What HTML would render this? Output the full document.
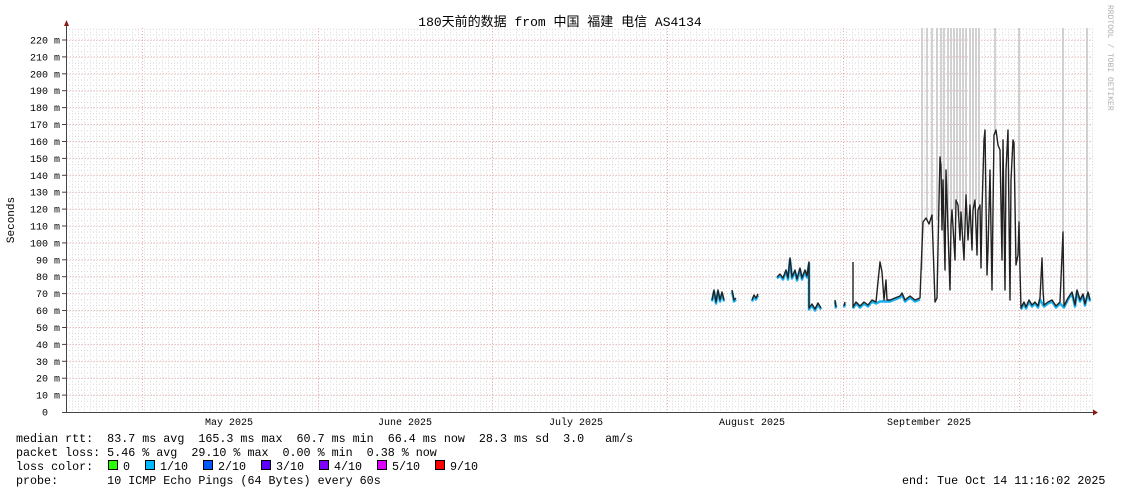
<!DOCTYPE html>
<html><head><meta charset="utf-8"><style>
html,body{margin:0;padding:0;background:#fff;width:1121px;height:494px;overflow:hidden}
svg text{font-family:"Liberation Mono","Noto Sans CJK SC",monospace;white-space:pre}
</style></head><body>
<svg width="1121" height="494" viewBox="0 0 1121 494" xmlns="http://www.w3.org/2000/svg">
<defs>
<pattern id="mg" x="66" y="40" width="6" height="5.636" patternUnits="userSpaceOnUse">
<rect x="0" y="0" width="1" height="1" fill="#d4d4d4"/>
<rect x="0" y="3" width="1" height="1" fill="#d4d4d4"/>
<rect x="3" y="0" width="1" height="1" fill="#d4d4d4"/>
</pattern>
</defs>
<rect x="67" y="28" width="1026" height="384" fill="url(#mg)"/>
<g stroke="#f0b0b0" stroke-width="1" stroke-dasharray="1,2">
<line x1="67" x2="1093" y1="40" y2="40"/><line x1="67" x2="1093" y1="56.9" y2="56.9"/><line x1="67" x2="1093" y1="73.8" y2="73.8"/><line x1="67" x2="1093" y1="90.7" y2="90.7"/><line x1="67" x2="1093" y1="107.6" y2="107.6"/><line x1="67" x2="1093" y1="124.5" y2="124.5"/><line x1="67" x2="1093" y1="141.5" y2="141.5"/><line x1="67" x2="1093" y1="158.4" y2="158.4"/><line x1="67" x2="1093" y1="175.3" y2="175.3"/><line x1="67" x2="1093" y1="192.2" y2="192.2"/><line x1="67" x2="1093" y1="209.1" y2="209.1"/><line x1="67" x2="1093" y1="226" y2="226"/><line x1="67" x2="1093" y1="242.9" y2="242.9"/><line x1="67" x2="1093" y1="259.8" y2="259.8"/><line x1="67" x2="1093" y1="276.7" y2="276.7"/><line x1="67" x2="1093" y1="293.6" y2="293.6"/><line x1="67" x2="1093" y1="310.5" y2="310.5"/><line x1="67" x2="1093" y1="327.5" y2="327.5"/><line x1="67" x2="1093" y1="344.4" y2="344.4"/><line x1="67" x2="1093" y1="361.3" y2="361.3"/><line x1="67" x2="1093" y1="378.2" y2="378.2"/><line x1="67" x2="1093" y1="395.1" y2="395.1"/>
<line x1="142.5" x2="142.5" y1="28" y2="412"/><line x1="318.5" x2="318.5" y1="28" y2="412"/><line x1="492.5" x2="492.5" y1="28" y2="412"/><line x1="667.5" x2="667.5" y1="28" y2="412"/><line x1="843.5" x2="843.5" y1="28" y2="412"/><line x1="1019.5" x2="1019.5" y1="28" y2="412"/>
</g>
<g stroke="#c4c4c4" stroke-width="1.5">
<line x1="922" x2="922" y1="28" y2="270"/><line x1="927" x2="927" y1="28" y2="220"/><line x1="932" x2="932" y1="28" y2="220"/><line x1="937" x2="937" y1="28" y2="220"/><line x1="941" x2="941" y1="28" y2="160"/><line x1="944" x2="944" y1="28" y2="200"/><line x1="948" x2="948" y1="28" y2="230"/><line x1="951" x2="951" y1="28" y2="225"/><line x1="954" x2="954" y1="28" y2="210"/><line x1="957" x2="957" y1="28" y2="200"/><line x1="960" x2="960" y1="28" y2="215"/><line x1="963" x2="963" y1="28" y2="230"/><line x1="966" x2="966" y1="28" y2="195"/><line x1="970" x2="970" y1="28" y2="205"/><line x1="973" x2="973" y1="28" y2="210"/><line x1="976" x2="976" y1="28" y2="200"/><line x1="979" x2="979" y1="28" y2="205"/><line x1="995" x2="995" y1="28" y2="135"/><line x1="1019" x2="1019" y1="28" y2="222"/><line x1="1063" x2="1063" y1="28" y2="232"/><line x1="1087" x2="1087" y1="28" y2="292"/>
</g>
<g fill="none" stroke-linejoin="round">
<g stroke="#1ab0f0" stroke-width="2.5" transform="translate(0,1.5)">
<polyline points="712,300 714,290 716,302 718,290 720,300 722,292 724,300"/><polyline points="732,290 734,300 736,298"/><polyline points="752,300 754,295 756,298 758,294"/>
<polyline points="777,277 780,274 783,278 786,270 788,278 790,258 792,277 795,270 797,279 800,268 802,278 805,270 807,276 809,262 809,308 812,304 815,309 818,303 821,308"/>
<polyline points="835,300 836,307"/><polyline points="844,306 845,302"/>
<polyline points="853,307 856,302 860,306 864,302 868,305 872,300 876,302 880,300 884,300 887,300 890,300 895,298 900,296 902,293 905,300 910,296 915,300 920,298"/>
<polyline points="1021,308 1024,302 1026,307 1029,300 1032,305 1035,302 1038,306 1040,298 1044,305 1048,302 1052,300 1056,306 1060,302 1064,306 1068,298 1072,292 1075,305 1077,290 1080,300 1083,294 1085,304 1088,292 1090,300"/>
</g>
<g stroke="#222" stroke-width="1.4">
<polyline points="712,300 714,290 716,302 718,290 720,300 722,292 724,300"/><polyline points="732,290 734,300 736,298"/><polyline points="752,300 754,295 756,298 758,294"/>
<polyline points="777,277 780,274 783,278 786,270 788,278 790,258 792,277 795,270 797,279 800,268 802,278 805,270 807,276 809,262 809,308 812,304 815,309 818,303 821,308"/>
<polyline points="835,300 836,307"/><polyline points="844,306 845,302"/>
<polyline points="853,262 853,307 856,302 860,306 864,302 868,305 872,300 876,302 880,262 882,272 884,300 886,280 887,300 890,300 895,298 900,296 902,293 905,300 910,296 915,300 920,298 921,272 923,222 926,218 929,224 932,215 935,302 937,298 939,200 940,157 941,165 942,230 943,180 945,270 946,170 948,230 950,290 951,225 952,210 955,260 956,200 958,205 960,240 961,212 964,260 966,195 968,240 970,205 972,250 973,210 975,200 977,255 978,210 980,205 981,268 982,210 984,140 985,130 987,275 988,250 990,170 992,290 993,210 994,135 996,130 998,145 1000,150 1002,260 1003,140 1005,290 1006,170 1008,130 1010,300 1011,180 1013,140 1014,143 1016,265 1018,255 1019,222 1020,270 1021,308 1024,302 1026,307 1029,300 1032,305 1035,302 1038,306 1040,298 1042,258 1043,290 1044,305 1048,302 1052,300 1056,306 1060,302 1063,232 1064,306 1068,298 1072,292 1075,305 1077,290 1080,300 1083,294 1085,304 1088,292 1090,300"/>
</g>
</g>
<g stroke="#444" stroke-width="1">
<line x1="66.5" x2="66.5" y1="24" y2="413"/><line x1="62" x2="1094" y1="412.5" y2="412.5"/>
<line x1="62" x2="66" y1="40" y2="40"/><line x1="62" x2="66" y1="56.9" y2="56.9"/><line x1="62" x2="66" y1="73.8" y2="73.8"/><line x1="62" x2="66" y1="90.7" y2="90.7"/><line x1="62" x2="66" y1="107.6" y2="107.6"/><line x1="62" x2="66" y1="124.5" y2="124.5"/><line x1="62" x2="66" y1="141.5" y2="141.5"/><line x1="62" x2="66" y1="158.4" y2="158.4"/><line x1="62" x2="66" y1="175.3" y2="175.3"/><line x1="62" x2="66" y1="192.2" y2="192.2"/><line x1="62" x2="66" y1="209.1" y2="209.1"/><line x1="62" x2="66" y1="226" y2="226"/><line x1="62" x2="66" y1="242.9" y2="242.9"/><line x1="62" x2="66" y1="259.8" y2="259.8"/><line x1="62" x2="66" y1="276.7" y2="276.7"/><line x1="62" x2="66" y1="293.6" y2="293.6"/><line x1="62" x2="66" y1="310.5" y2="310.5"/><line x1="62" x2="66" y1="327.5" y2="327.5"/><line x1="62" x2="66" y1="344.4" y2="344.4"/><line x1="62" x2="66" y1="361.3" y2="361.3"/><line x1="62" x2="66" y1="378.2" y2="378.2"/><line x1="62" x2="66" y1="395.1" y2="395.1"/>
</g>
<polygon points="64,26 69,26 66.5,20" fill="#8b1a1a"/><polygon points="1093,409.5 1093,415.5 1098,412.5" fill="#8b1a1a"/>
<g font-size="10" fill="#000" text-anchor="end">
<text x="60" y="43.5">220 m</text><text x="60" y="60.4">210 m</text><text x="60" y="77.3">200 m</text><text x="60" y="94.2">190 m</text><text x="60" y="111.1">180 m</text><text x="60" y="128">170 m</text><text x="60" y="145">160 m</text><text x="60" y="161.9">150 m</text><text x="60" y="178.8">140 m</text><text x="60" y="195.7">130 m</text><text x="60" y="212.6">120 m</text><text x="60" y="229.5">110 m</text><text x="60" y="246.4">100 m</text><text x="60" y="263.3">90 m</text><text x="60" y="280.2">80 m</text><text x="60" y="297.1">70 m</text><text x="60" y="314">60 m</text><text x="60" y="331">50 m</text><text x="60" y="347.9">40 m</text><text x="60" y="364.8">30 m</text><text x="60" y="381.7">20 m</text><text x="60" y="398.6">10 m</text><text x="48" y="415.5">0</text>
</g>
<g font-size="10" fill="#000" text-anchor="middle">
<text x="229" y="425">May 2025</text><text x="405" y="425">June 2025</text><text x="576" y="425">July 2025</text><text x="752" y="425">August 2025</text><text x="929" y="425">September 2025</text>
</g>
<text x="560" y="26" font-size="13" text-anchor="middle" fill="#000">180天前的数据 from 中国 福建 电信 AS4134</text>
<text transform="translate(14,220) rotate(-90)" font-size="11" text-anchor="middle" fill="#000">Seconds</text>
<text transform="translate(1108,5) rotate(90)" font-size="8" fill="#b0b0b0">RRDTOOL / TOBI OETIKER</text>
<g font-size="11.7" fill="#000">
<text x="16" y="442">median rtt:  83.7 ms avg  165.3 ms max  60.7 ms min  66.4 ms now  28.3 ms sd  3.0   am/s</text>
<text x="16" y="456">packet loss: 5.46 % avg  29.10 % max  0.00 % min  0.38 % now</text>
<text x="16" y="470">loss color:</text>
<text x="16" y="484">probe:       10 ICMP Echo Pings (64 Bytes) every 60s</text>
<text x="902" y="484">end: Tue Oct 14 11:16:02 2025</text>
<text x="123" y="470">0</text><text x="160" y="470">1/10</text><text x="218" y="470">2/10</text><text x="276" y="470">3/10</text><text x="334" y="470">4/10</text><text x="392" y="470">5/10</text><text x="450" y="470">9/10</text>
</g>
<g stroke="#000" stroke-width="1">
<rect x="108.5" y="460.5" width="9" height="9" fill="#26ff00"/>
<rect x="145.5" y="460.5" width="9" height="9" fill="#00b8ff"/>
<rect x="203.5" y="460.5" width="9" height="9" fill="#0059ff"/>
<rect x="261.5" y="460.5" width="9" height="9" fill="#5e00ff"/>
<rect x="319.5" y="460.5" width="9" height="9" fill="#7e00ff"/>
<rect x="377.5" y="460.5" width="9" height="9" fill="#dd00ff"/>
<rect x="435.5" y="460.5" width="9" height="9" fill="#ff0000"/>
</g>
</svg>
</body></html>
